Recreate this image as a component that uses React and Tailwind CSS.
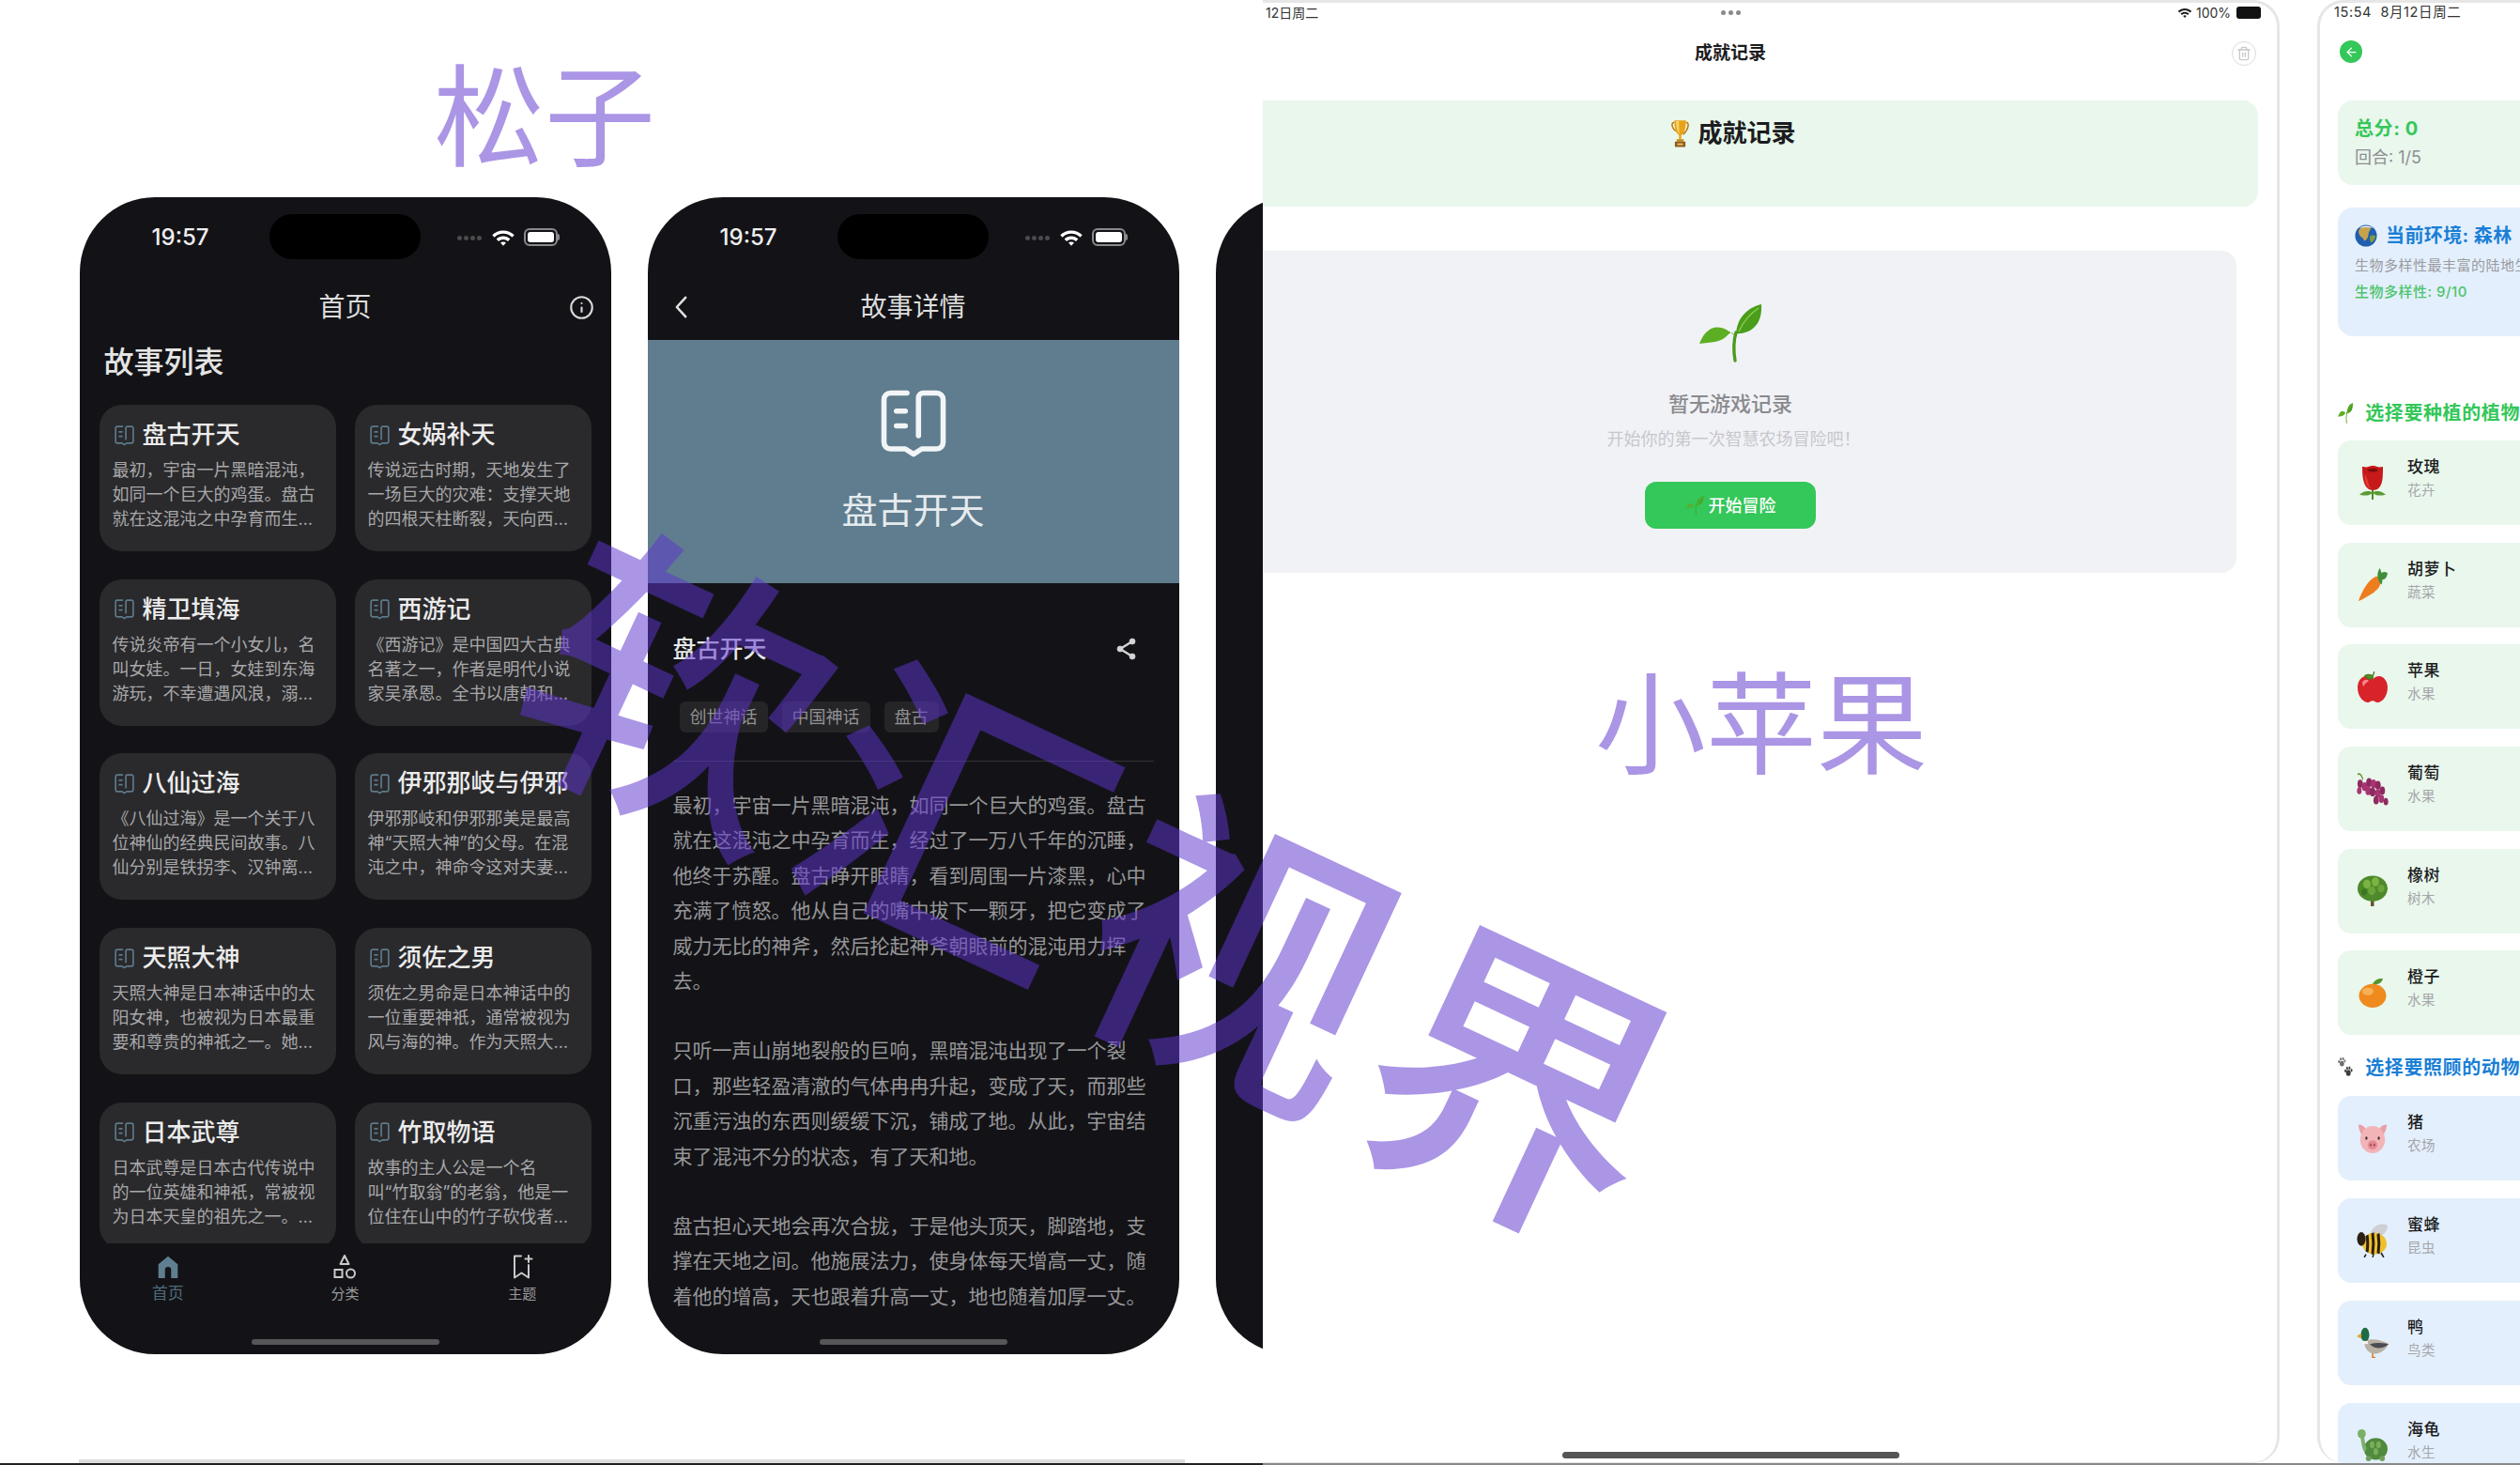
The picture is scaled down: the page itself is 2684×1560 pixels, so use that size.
import React from 'react';
import { ArrowLeft, Info, Trash2 } from 'lucide-react';

const stories = [
  { title: '盘古开天', lines: ['最初，宇宙一片黑暗混沌，', '如同一个巨大的鸡蛋。盘古', '就在这混沌之中孕育而生…'] },
  { title: '女娲补天', lines: ['传说远古时期，天地发生了', '一场巨大的灾难：支撑天地', '的四根天柱断裂，天向西…'] },
  { title: '精卫填海', lines: ['传说炎帝有一个小女儿，名', '叫女娃。一日，女娃到东海', '游玩，不幸遭遇风浪，溺…'] },
  { title: '西游记', lines: ['《西游记》是中国四大古典', '名著之一，作者是明代小说', '家吴承恩。全书以唐朝和…'] },
  { title: '八仙过海', lines: ['《八仙过海》是一个关于八', '位神仙的经典民间故事。八', '仙分别是铁拐李、汉钟离…'] },
  { title: '伊邪那岐与伊邪', lines: ['伊邪那岐和伊邪那美是最高', '神“天照大神”的父母。在混', '沌之中，神命令这对夫妻…'] },
  { title: '天照大神', lines: ['天照大神是日本神话中的太', '阳女神，也被视为日本最重', '要和尊贵的神祇之一。她…'] },
  { title: '须佐之男', lines: ['须佐之男命是日本神话中的', '一位重要神祇，通常被视为', '风与海的神。作为天照大…'] },
  { title: '日本武尊', lines: ['日本武尊是日本古代传说中', '的一位英雄和神祇，常被视', '为日本天皇的祖先之一。…'] },
  { title: '竹取物语', lines: ['故事的主人公是一个名', '叫“竹取翁”的老翁，他是一', '位住在山中的竹子砍伐者…'] },
];

const body = [
  ['最初，宇宙一片黑暗混沌，如同一个巨大的鸡蛋。盘古', '就在这混沌之中孕育而生，经过了一万八千年的沉睡，', '他终于苏醒。盘古睁开眼睛，看到周围一片漆黑，心中', '充满了愤怒。他从自己的嘴中拔下一颗牙，把它变成了', '威力无比的神斧，然后抡起神斧朝眼前的混沌用力挥', '去。'],
  ['只听一声山崩地裂般的巨响，黑暗混沌出现了一个裂', '口，那些轻盈清澈的气体冉冉升起，变成了天，而那些', '沉重污浊的东西则缓缓下沉，铺成了地。从此，宇宙结', '束了混沌不分的状态，有了天和地。'],
  ['盘古担心天地会再次合拢，于是他头顶天，脚踏地，支', '撑在天地之间。他施展法力，使身体每天增高一丈，随', '着他的增高，天也跟着升高一丈，地也随着加厚一丈。'],
];

const BookIcon = ({ className }) => (
  <svg viewBox="0 0 24 24" fill="none" stroke="currentColor" strokeWidth="1.6" strokeLinecap="round" strokeLinejoin="round" className={className}>
    <path d="M10 3H5a2 2 0 0 0-2 2v13a2 2 0 0 0 2 2h4.5l2.5 1.6 2.5-1.6H19a2 2 0 0 0 2-2V5a2 2 0 0 0-2-2h-4a1.5 1.5 0 0 0-1.5 1.5V16" />
    <path d="M6.8 8.5h2.7M6.8 13h2.7" />
  </svg>
);

const Wifi = ({ className }) => (
  <svg viewBox="0 0 24 18" fill="currentColor" className={className}>
    <path d="M12 3C7.8 3 4 4.7 1.2 7.3L3.3 9.6C5.6 7.5 8.6 6.1 12 6.1s6.4 1.4 8.7 3.5l2.1-2.3C20 4.7 16.2 3 12 3z" />
    <path d="M12 8.5c-2.6 0-5 1-6.8 2.7l2.2 2.3c1.2-1.1 2.8-1.8 4.6-1.8s3.4.7 4.6 1.8l2.2-2.3C17 9.5 14.6 8.5 12 8.5z" />
    <path d="M12 14c-1.1 0-2 .4-2.7 1.1L12 18l2.7-2.9C14 14.4 13.1 14 12 14z" />
  </svg>
);

const ShareIcon = ({ className }) => (
  <svg viewBox="0 0 24 26" className={className} fill="currentColor" stroke="currentColor" strokeWidth="2.4">
    <path d="M18 5 5 13l13 8" fill="none" />
    <circle cx="18" cy="5" r="3" strokeWidth="0.8" />
    <circle cx="5" cy="13" r="3" strokeWidth="0.8" />
    <circle cx="18" cy="21" r="3" strokeWidth="0.8" />
  </svg>
);

const Battery = () => (
  <div className="flex items-center">
    <div className="w-[36px] h-[19px] rounded-[6px] border-[2px] border-[#8a8a8c] p-[2px]">
      <div className="w-full h-full rounded-[3px] bg-white" />
    </div>
    <div className="w-[2px] h-[7px] bg-[#8a8a8c] rounded-r" />
  </div>
);

const StatusBar = () => (
  <div className="flex items-center h-[48px] mt-[18px] shrink-0">
    <div className="w-[202px] pl-[13px] pt-[2px] text-center text-[24px] font-medium text-[#eeeeee]">19:57</div>
    <div className="w-[161px] h-[48px] rounded-full bg-black" />
    <div className="ml-[39px] flex gap-[2px] w-[28px] mt-[3px]">
      <span className="w-[5px] h-[5px] rounded-full bg-[#4b4b4e]" />
      <span className="w-[5px] h-[5px] rounded-full bg-[#4b4b4e]" />
      <span className="w-[5px] h-[5px] rounded-full bg-[#4b4b4e]" />
      <span className="w-[5px] h-[5px] rounded-full bg-[#4b4b4e]" />
    </div>
    <Wifi className="ml-[8px] w-[26px] h-[20px] text-white" />
    <div className="ml-[9px]">
      <Battery />
    </div>
  </div>
);

const HomeBar = () => <div className="mt-auto mb-[10px] mx-auto w-[200px] h-[6px] rounded-full bg-[#565659] shrink-0" />;

const StoryCard = ({ story }) => (
  <div className="rounded-[24px] bg-[#2a2a2c] h-[156px] px-[14px] pt-[18px]">
    <div className="flex items-center h-[28px] gap-[7px]">
      <BookIcon className="w-[25px] h-[25px] text-[#5d7a8a] shrink-0" />
      <span className="text-[26px] font-medium leading-[28px] text-[#ececec] whitespace-nowrap">{story.title}</span>
    </div>
    <div className="mt-[11px] text-[18px] leading-[26px] text-[#a8a8aa]">
      {story.lines.map((line) => (
        <div key={line} className="whitespace-nowrap">{line}</div>
      ))}
    </div>
  </div>
);

const HomePhone = () => (
  <div className="w-[566px] h-[1232px] rounded-[80px] overflow-hidden bg-[#131317] flex flex-col shrink-0">
    <StatusBar />
    <div className="grid grid-cols-[1fr_auto_1fr] items-center h-[52px] mt-[25px] shrink-0">
      <div />
      <div className="text-[28px] text-[#dddddd]">首页</div>
      <div className="flex justify-end pr-[18px]">
        <Info className="w-[27px] h-[27px] text-[#d8d8d8]" strokeWidth={1.9} />
      </div>
    </div>
    <div className="mt-[13px] pl-[26px] text-[32px] leading-[40px] font-medium text-[#e4e4e4] shrink-0">故事列表</div>
    <div className="mt-[25px] h-[893px] overflow-hidden grid grid-cols-[252px_252px] auto-rows-[156px] gap-x-[20px] gap-y-[29.7px] px-[21px] shrink-0">
      {stories.map((story) => (
        <StoryCard key={story.title} story={story} />
      ))}
    </div>
    <div className="grid grid-cols-3 pt-[11px] shrink-0">
      <div className="flex flex-col items-center">
        <svg viewBox="0 0 24 24" className="w-[26px] h-[28px] text-[#5f7f90]" fill="currentColor">
          <path d="M12 1.5 2.5 9.5V23H9v-8a3 3 0 0 1 6 0v8h6.5V9.5z" />
        </svg>
        <span className="text-[17px] leading-[24px] mt-[2px] text-[#4f6a79]">首页</span>
      </div>
      <div className="flex flex-col items-center">
        <svg viewBox="0 0 26 28" className="w-[26px] h-[28px] text-[#c9c9c9]" fill="none" stroke="currentColor" strokeWidth="2">
          <path d="M13 2 17.5 11h-9z" strokeLinejoin="round" />
          <rect x="2.5" y="17" width="8" height="8" />
          <circle cx="19.5" cy="21" r="4.5" />
        </svg>
        <span className="text-[15px] leading-[24px] mt-[3px] text-[#9a9a9a]">分类</span>
      </div>
      <div className="flex flex-col items-center">
        <svg viewBox="0 0 26 28" className="w-[26px] h-[28px] text-[#c9c9c9]" fill="none" stroke="currentColor" strokeWidth="2" strokeLinecap="round" strokeLinejoin="round">
          <path d="M12 2.5H5v23l7.5-5 7.5 5V12" />
          <path d="M20 2v7M16.5 5.5h7" />
        </svg>
        <span className="text-[15px] leading-[24px] mt-[3px] text-[#9a9a9a]">主题</span>
      </div>
    </div>
    <HomeBar />
  </div>
);

const DetailPhone = () => (
  <div className="w-[566px] h-[1232px] rounded-[80px] overflow-hidden bg-[#131317] flex flex-col shrink-0">
    <StatusBar />
    <div className="grid grid-cols-[1fr_auto_1fr] items-center h-[52px] mt-[25px] shrink-0">
      <div className="pl-[28px]">
        <svg viewBox="0 0 16 28" className="w-[15px] h-[26px] text-[#e0e0e0]" fill="none" stroke="currentColor" strokeWidth="2.8" strokeLinecap="round" strokeLinejoin="round">
          <path d="M13 3 3 14l10 11" />
        </svg>
      </div>
      <div className="text-[28px] text-[#dddddd]">故事详情</div>
      <div />
    </div>
    <div className="mt-[9px] h-[259px] bg-[#5f7d8e] flex flex-col items-center pt-[52px] shrink-0">
      <BookIcon className="w-[84px] h-[84px] -my-[6px] text-[#f2f5f7]" />
      <div className="mt-[32px] text-[38px] leading-[50px] text-[#e6ebee]">盘古开天</div>
    </div>
    <div className="flex items-center justify-between pl-[27px] pr-[43px] pt-[54px] shrink-0">
      <span className="text-[25px] leading-[32px] font-medium text-[#e8e8e8]">盘古开天</span>
      <ShareIcon className="w-[26px] h-[26px] text-[#d4d4d4]" />
    </div>
    <div className="flex gap-[15px] pl-[34px] mt-[40px] shrink-0">
      {['创世神话', '中国神话', '盘古'].map((tag) => (
        <span key={tag} className="h-[33px] px-[11px] flex items-center rounded-[6px] bg-[#252527] text-[18px] text-[#929294]">{tag}</span>
      ))}
    </div>
    <div className="mt-[30px] mx-[27px] h-[1px] bg-[#333336] shrink-0" />
    <div className="mt-[28px] pl-[27px] text-[21px] leading-[37.4px] text-[#969698] flex flex-col gap-[37px] shrink-0">
      {body.map((para) => (
        <div key={para[0]}>
          {para.map((line) => (
            <div key={line} className="whitespace-nowrap">{line}</div>
          ))}
        </div>
      ))}
    </div>
    <HomeBar />
  </div>
);

// emoji drawings, there is no colour emoji font in the sandbox
const Trophy = ({ className }) => (
  <svg viewBox="0 0 30 48" className={className}>
    <path d="M5 5C-1 5 0 17 10 21M25 5c6 0 5 12-5 21" fill="none" stroke="#b9770e" strokeWidth="2.4" />
    <path d="M5 2h20c0 14-3 22-8 25v7h-4v-7C8 24 5 16 5 2z" fill="#e8a317" />
    <path d="M8 3h5c0 10 0 16 1 22-4-4-6-12-6-22z" fill="#f8d36a" />
    <rect x="9" y="34" width="12" height="4" fill="#c98a14" />
    <rect x="6" y="38" width="18" height="9" rx="1" fill="#8d5a1c" />
    <rect x="10" y="41" width="10" height="3" fill="#e8c26a" />
  </svg>
);

const Sprout = ({ className }) => (
  <svg viewBox="0 0 68 62" className={className} preserveAspectRatio="none">
    <path d="M39 60c-2-12-2-20 1-30" fill="none" stroke="#4d9a1c" strokeWidth="3.4" strokeLinecap="round" />
    <path d="M39 34C23 19 9 22 1 42c12-2 22 0 31-10 3-3 5-2 7 2z" fill="#5cae23" />
    <path d="M40 32C41 15 51 4 67 0c1 16-5 28-21 31-3 0-5 0-6 1z" fill="#4a9e1b" />
    <path d="M43 29C48 18 55 10 64 4" fill="none" stroke="#8ccc4c" strokeWidth="1.4" />
  </svg>
);

const Globe = ({ className }) => (
  <svg viewBox="0 0 26 26" className={className}>
    <circle cx="13" cy="13" r="12.5" fill="#1f5fae" />
    <path d="M6 5c3-3 9-4 12-1 1 3-2 3-2 6 0 4-2 8-5 9-1-3-2-4-4-5-2-2-4-6-1-9z" fill="#c6a24a" />
    <path d="M18 13c2-1 5-1 6 1-1 4-3 6-5 7-2-2-2-6-1-8z" fill="#7f9a44" />
    <path d="M5 4c5-3 12-3 16 0-5-1-11-1-16 0z" fill="#e9f3fb" />
  </svg>
);

const Rose = ({ className }) => (
  <svg viewBox="0 0 30 36" className={className} preserveAspectRatio="none">
    <path d="M15 22v13" stroke="#4d8a2a" strokeWidth="2" />
    <path d="M15 28C10 25 5 27 1 30c5 1 10 2 14-2zM15 28c5-3 10-1 14 2-5 1-10 2-14-2z" fill="#5b9a34" />
    <path d="M4 2c3 0 5 1 6 0 2-1 7-2 10 0 2 1 4 0 6 0 0 10 0 18-5 22-3 2-8 2-11 0C5 20 4 12 4 2z" fill="#c61a1a" />
    <path d="M9 5c4-2 9-2 12 0-1 3-10 3-12 0z" fill="#7e0c0c" />
    <path d="M7 9c3 5 3 10 6 15-5-2-7-8-6-15z" fill="#e23a30" />
  </svg>
);

const Carrot = ({ className }) => (
  <svg viewBox="0 0 34 20" className={className} preserveAspectRatio="none">
    <path d="M1 20C5 14 12 7 21 5c3 0 5 2 5 4-1 3-4 4-8 6-6 2-12 4-17 5z" fill="#ee7d1f" />
    <path d="M23 6c-1-2 0-4 2-6 1 1 2 2 2 3 2-1 5-1 7 0-1 3-3 4-6 4 0 1 0 2-1 3-2-1-3-2-4-4z" fill="#3f8f3a" />
  </svg>
);

const Apple = ({ className }) => (
  <svg viewBox="0 0 32 20" className={className} preserveAspectRatio="none">
    <path d="M16 5C10 1 1 3 0 10c0 7 7 10 11 10 2 0 3-1 5-1s3 1 5 1c4 0 11-3 11-10C31 3 22 1 16 5z" fill="#d8232a" />
    <path d="M5 7c2-2 5-2 7-1-2 1-5 2-6 4z" fill="#f7888a" />
    <path d="M16 5c0-2 1-4 2-5M16 3C13 2 10 2 8 3c3 2 6 2 8 1z" stroke="#4a7a22" strokeWidth="1.2" fill="#5c9a2a" />
  </svg>
);

const Grapes = ({ className }) => (
  <svg viewBox="0 0 36 24" className={className} fill="#8e2a5f" preserveAspectRatio="none">
    <path d="M1 1c3-1 5 1 6 4" stroke="#6a8a2a" strokeWidth="1.2" fill="none" />
    <circle cx="4" cy="8" r="3" /><circle cx="9" cy="10" r="3.2" fill="#a83572" /><circle cx="14" cy="7" r="3.2" /><circle cx="19" cy="8" r="3.2" fill="#a83572" />
    <circle cx="24" cy="9" r="3.2" /><circle cx="3" cy="13" r="2.6" fill="#a83572" /><circle cx="13" cy="13" r="3.2" fill="#a83572" /><circle cx="18" cy="14" r="3.2" />
    <circle cx="24" cy="15" r="3.2" fill="#a83572" /><circle cx="29" cy="13" r="3" /><circle cx="22" cy="20" r="3" /><circle cx="28" cy="19" r="3" fill="#a83572" /><circle cx="33" cy="21" r="2.6" />
  </svg>
);

const Tree = ({ className }) => (
  <svg viewBox="0 0 32 28" className={className} preserveAspectRatio="none">
    <rect x="14" y="20" width="3.5" height="8" fill="#6b5230" />
    <ellipse cx="16" cy="12" rx="16" ry="11.5" fill="#4e8a2b" />
    <circle cx="10" cy="8" r="4" fill="#7cb443" /><circle cx="19" cy="6" r="4" fill="#7cb443" /><circle cx="25" cy="12" r="3.5" fill="#6aa53a" /><circle cx="15" cy="14" r="4" fill="#6aa53a" /><circle cx="7" cy="15" r="3" fill="#3e7424" />
  </svg>
);

const Orange = ({ className }) => (
  <svg viewBox="0 0 30 24" className={className} preserveAspectRatio="none">
    <ellipse cx="15" cy="14.5" rx="14.5" ry="9.5" fill="#ef8a1e" />
    <ellipse cx="10" cy="11" rx="6" ry="3" fill="#f8b157" />
    <path d="M15 5C17 2 22 0 26 1c-2 4-6 5-11 4z" fill="#55932c" />
  </svg>
);

const Paws = ({ className }) => (
  <svg viewBox="0 0 26 20" className={className} preserveAspectRatio="none">
    <g fill="#6f6f6f">
      <ellipse cx="7" cy="6" rx="3.8" ry="2.6" />
      <circle cx="2" cy="4" r="1.5" /><circle cx="5" cy="1.6" r="1.5" /><circle cx="9" cy="1.4" r="1.5" /><circle cx="12" cy="3.4" r="1.4" />
    </g>
    <g fill="#3d3d3d">
      <ellipse cx="18" cy="15" rx="4" ry="3" />
      <circle cx="13" cy="13" r="1.6" /><circle cx="16" cy="10.4" r="1.6" /><circle cx="20" cy="10.2" r="1.6" /><circle cx="23.4" cy="12.4" r="1.6" />
    </g>
  </svg>
);

const Pig = ({ className }) => (
  <svg viewBox="0 0 34 22" className={className} preserveAspectRatio="none">
    <path d="M1 1c5 0 8 2 9 5L5 9C3 7 1 4 1 1zM33 1c-5 0-8 2-9 5l5 3c2-2 4-5 4-8z" fill="#e9a0a6" />
    <ellipse cx="17" cy="12" rx="14" ry="10" fill="#f3b4b8" />
    <ellipse cx="17" cy="16" rx="5.5" ry="3.4" fill="#e38b93" />
    <circle cx="15" cy="16" r="1" fill="#9c4a52" /><circle cx="19" cy="16" r="1" fill="#9c4a52" />
    <circle cx="10" cy="11" r="1.2" fill="#3a2a2a" /><circle cx="24" cy="11" r="1.2" fill="#3a2a2a" />
  </svg>
);

const Bee = ({ className }) => (
  <svg viewBox="0 0 34 22" className={className} preserveAspectRatio="none">
    <path d="M14 7C17 1 26-1 33 1c0 5-8 9-18 8z" fill="#cfcfd4" />
    <ellipse cx="19" cy="13" rx="13" ry="7" fill="#f0bf2c" />
    <path d="M11 7.5c1 3 1 8 0 11M17 6c1 4 1 10 0 14M23 6.5c1 4 1 9 0 13" stroke="#2a2014" strokeWidth="3" fill="none" />
    <circle cx="5" cy="10" r="4.5" fill="#2a2014" />
    <path d="M10 20l-2 2M18 20l-1 2M26 19l3 3" stroke="#2a2014" strokeWidth="1.4" />
  </svg>
);

const Duck = ({ className }) => (
  <svg viewBox="0 0 34 20" className={className} preserveAspectRatio="none">
    <path d="M8 9c8-2 18-1 26 2-4 5-12 7-18 6-5-1-8-4-8-8z" fill="#b8b0a4" />
    <path d="M14 11c6-1 13-1 20 0-5 3-14 4-20 0z" fill="#4b4b52" />
    <circle cx="9" cy="5" r="4.5" fill="#1f6b45" />
    <path d="M5 4 0 6l5 1.5z" fill="#e0a72e" />
    <rect x="6" y="9" width="6" height="2" fill="#f2f2f2" />
    <path d="M17 17v3h3" stroke="#e2762a" strokeWidth="1.5" fill="none" />
  </svg>
);

const Turtle = ({ className }) => (
  <svg viewBox="0 0 34 24" className={className} preserveAspectRatio="none">
    <ellipse cx="20" cy="15" rx="13" ry="8" fill="#4f8a3d" />
    <circle cx="16" cy="12" r="2.6" fill="#79ad59" /><circle cx="23" cy="12" r="2.6" fill="#79ad59" /><circle cx="20" cy="17" r="2.6" fill="#79ad59" />
    <path d="M9 16C6 14 6 8 5 6" stroke="#7cb06a" strokeWidth="4" fill="none" />
    <ellipse cx="4.5" cy="4" rx="4.5" ry="3.4" fill="#7cb06a" />
    <ellipse cx="12" cy="22" rx="3" ry="2" fill="#6ea05c" /><ellipse cx="27" cy="22" rx="3" ry="2" fill="#6ea05c" />
  </svg>
);

const plants = [
  { name: '玫瑰', kind: '花卉', icon: <Rose className="w-[30px] h-[38px]" /> },
  { name: '胡萝卜', kind: '蔬菜', icon: <Carrot className="w-[32px] h-[35px]" /> },
  { name: '苹果', kind: '水果', icon: <Apple className="w-[32px] h-[33px]" /> },
  { name: '葡萄', kind: '水果', icon: <Grapes className="w-[34px] h-[35px]" /> },
  { name: '橡树', kind: '树木', icon: <Tree className="w-[32px] h-[33px]" /> },
  { name: '橙子', kind: '水果', icon: <Orange className="w-[30px] h-[32px]" /> },
];

const animals = [
  { name: '猪', kind: '农场', icon: <Pig className="w-[32px] h-[32px]" /> },
  { name: '蜜蜂', kind: '昆虫', icon: <Bee className="w-[34px] h-[36px]" /> },
  { name: '鸭', kind: '鸟类', icon: <Duck className="w-[34px] h-[33px]" /> },
  { name: '海龟', kind: '水生', icon: <Turtle className="w-[33px] h-[35px]" /> },
];

const PickCard = ({ item, tone }) => (
  <div className={`h-[90px] rounded-[14px] flex items-center pl-[20px] ${tone}`}>
    <div className="w-[34px] flex justify-center">{item.icon}</div>
    <div className="ml-[20px] pb-[10px]">
      <div className="text-[17px] leading-[24px] font-medium text-[#1c1c1e] tracking-[0.5px]">{item.name}</div>
      <div className="mt-[2px] text-[14.5px] leading-[22px] text-[#a6a6ab] tracking-[0.5px]">{item.kind}</div>
    </div>
  </div>
);

export default function App() {
  return (
    <div className="relative w-[2684px] h-[1560px] overflow-hidden bg-white font-['Inter','Noto_Sans_CJK_SC',sans-serif]">
      <div className="flex h-[1558px]">
        {/* left half, the phones */}
        <div className="w-[1345px] shrink-0 overflow-hidden flex flex-col">
          <div className="h-[210px] pl-[462px] pt-[52px] shrink-0">
            <div className="text-[118px] leading-[130px] text-[#5e34ce]/[0.52] font-['Noto_Sans_CJK_SC',sans-serif]">松子</div>
          </div>
          <div className="flex gap-[39px] pl-[84.5px] shrink-0">
            <HomePhone />
            <DetailPhone />
            <div className="w-[566px] h-[1232px] rounded-[80px] bg-[#131317] shrink-0" />
          </div>
          <div className="mt-auto ml-[84px] w-[1178px] h-[4px] bg-[#dddddd] shrink-0" />
        </div>

        {/* first tablet */}
        <div className="w-[1083px] shrink-0 rounded-tr-[28px] rounded-br-[28px] border-t-[3px] border-r-[3px] border-b-[1px] border-[#e6e6e6] flex flex-col overflow-hidden">
          <div className="flex items-center h-[20px] shrink-0">
            <span className="ml-[3px] text-[14px] text-[#333333] w-[456px]">12日周二</span>
            <div className="flex gap-[3px] w-[78px] justify-center">
              <span className="w-[5px] h-[5px] rounded-full bg-[#8a8a8e]" />
              <span className="w-[5px] h-[5px] rounded-full bg-[#8a8a8e]" />
              <span className="w-[5px] h-[5px] rounded-full bg-[#8a8a8e]" />
            </div>
            <Wifi className="ml-[437px] w-[16px] h-[14px] text-[#1c1c1e]" />
            <span className="ml-[4px] text-[14px] text-[#333333]">100%</span>
            <div className="ml-[6px] w-[26px] h-[13px] rounded-[3px] bg-[#111111]" />
          </div>
          <div className="flex items-center h-[40px] mt-[14px] shrink-0">
            <div className="w-[996px] text-center text-[19px] font-bold text-[#1c1c1e]">成就记录</div>
            <div className="ml-[36px] w-[26px] h-[26px] rounded-full border border-[#dcdce0] flex items-center justify-center">
              <Trash2 className="w-[16px] h-[16px] text-[#c8c8cc]" strokeWidth={2} />
            </div>
          </div>
          <div className="mt-[30px] w-[1060px] h-[113px] rounded-r-[16px] bg-[#e9f7ec] flex justify-center pt-[19px] pr-[61px] gap-[5px] shrink-0">
            <Trophy className="w-[27px] h-[30px] mt-[1px]" />
            <span className="text-[26px] leading-[32px] font-bold text-[#1c1c1e]">成就记录</span>
          </div>
          <div className="mt-[47px] w-[1037px] h-[343px] rounded-r-[16px] bg-[#f1f2f6] flex flex-col items-center pr-[41px] pt-[57px] shrink-0">
            <Sprout className="w-[68px] h-[62px]" />
            <div className="mt-[30px] text-[22px] leading-[28px] font-medium text-[#8a8a8e]">暂无游戏记录</div>
            <div className="mt-[12px] ml-[7px] text-[18px] leading-[24px] text-[#c7c7cc]">开始你的第一次智慧农场冒险吧！</div>
            <div className="mt-[33px] w-[182px] h-[50px] rounded-[12px] bg-[#34c759] flex items-center justify-center gap-[5px]">
              <Sprout className="w-[20px] h-[20px] opacity-70" />
              <span className="text-[18px] font-medium text-white">开始冒险</span>
            </div>
          </div>
          <div className="mt-[89px] pl-[354px] text-[118px] leading-[130px] text-[#5e34ce]/[0.52] font-['Noto_Sans_CJK_SC',sans-serif] shrink-0">小苹果</div>
          <div className="mt-auto mb-[4px] ml-[319px] w-[359px] h-[7px] rounded-full bg-[#555558] shrink-0" />
        </div>

        {/* second tablet, runs off the right side */}
        <div className="ml-[40px] flex-1 overflow-hidden rounded-tl-[28px] rounded-bl-[28px] border-t-[3px] border-l-[3px] border-[#e6e6e6] flex flex-col">
          <div className="w-[420px] pl-[15px] h-[20px] flex items-center text-[14.5px] text-[#333333] tracking-[0.6px] shrink-0">15:54&nbsp;&nbsp;8月12日周二</div>
          <div className="mt-[20px] ml-[21px] w-[24px] h-[24px] rounded-full bg-[#34c759] flex items-center justify-center shrink-0">
            <ArrowLeft className="w-[15px] h-[15px] text-white" strokeWidth={2} />
          </div>
          <div className="mt-[40px] ml-[19px] w-[420px] h-[90px] rounded-[16px] bg-[#e9f7ec] pl-[18px] pt-[15px] shrink-0">
            <div className="text-[20px] leading-[30px] font-bold text-[#34c759] tracking-[0.6px]">总分: 0</div>
            <div className="mt-[3px] text-[18px] leading-[26px] text-[#8e8e93]">回合: 1/5</div>
          </div>
          <div className="mt-[24px] ml-[19px] w-[420px] h-[137px] rounded-[16px] bg-[#e3effc] pl-[18px] pt-[17px] shrink-0">
            <div className="flex items-center gap-[9px] h-[26px]">
              <Globe className="w-[24px] h-[24px]" />
              <span className="text-[20px] font-bold text-[#1a7fd6] tracking-[0.4px]">当前环境: 森林</span>
            </div>
            <div className="mt-[7px] text-[15px] leading-[24px] text-[#9a9a9e] tracking-[0.5px] whitespace-nowrap">生物多样性最丰富的陆地生态系统</div>
            <div className="mt-[4px] text-[15px] leading-[24px] font-medium text-[#4cc46c] tracking-[0.5px]">生物多样性: 9/10</div>
          </div>
          <div className="mt-[69px] ml-[19px] flex items-center gap-[8px] h-[26px] shrink-0">
            <Sprout className="w-[26px] h-[22px]" />
            <span className="ml-[5px] text-[20px] font-bold text-[#34c759] tracking-[0.6px] whitespace-nowrap">选择要种植的植物</span>
          </div>
          <div className="mt-[16px] ml-[19px] w-[420px] flex flex-col gap-[18.7px] shrink-0">
            {plants.map((item) => (
              <PickCard key={item.name} item={item} tone="bg-[#e9f7ec]" />
            ))}
          </div>
          <div className="mt-[22px] ml-[19px] flex items-center gap-[8px] h-[26px] shrink-0">
            <Paws className="w-[26px] h-[22px]" />
            <span className="ml-[5px] text-[20px] font-bold text-[#1a7fd6] tracking-[0.6px] whitespace-nowrap">选择要照顾的动物</span>
          </div>
          <div className="mt-[17px] ml-[19px] w-[420px] flex flex-col gap-[18.7px] shrink-0">
            {animals.map((item) => (
              <PickCard key={item.name} item={item} tone="bg-[#e3effc]" />
            ))}
          </div>
        </div>
      </div>
      <div className="flex h-[2px]">
        <div className="w-[1345px] bg-[#222222]" />
        <div className="flex-1 bg-[#888888]" />
      </div>

      {/* watermark lies over everything */}
      <div className="absolute left-[1184px] top-[932px] -translate-x-1/2 -translate-y-1/2 rotate-[25deg] whitespace-nowrap text-[314px] leading-none tracking-[16px] font-medium text-[#5e34ce]/[0.52] font-['Noto_Sans_CJK_SC',sans-serif] pointer-events-none">软汇视界</div>
    </div>
  );
}
